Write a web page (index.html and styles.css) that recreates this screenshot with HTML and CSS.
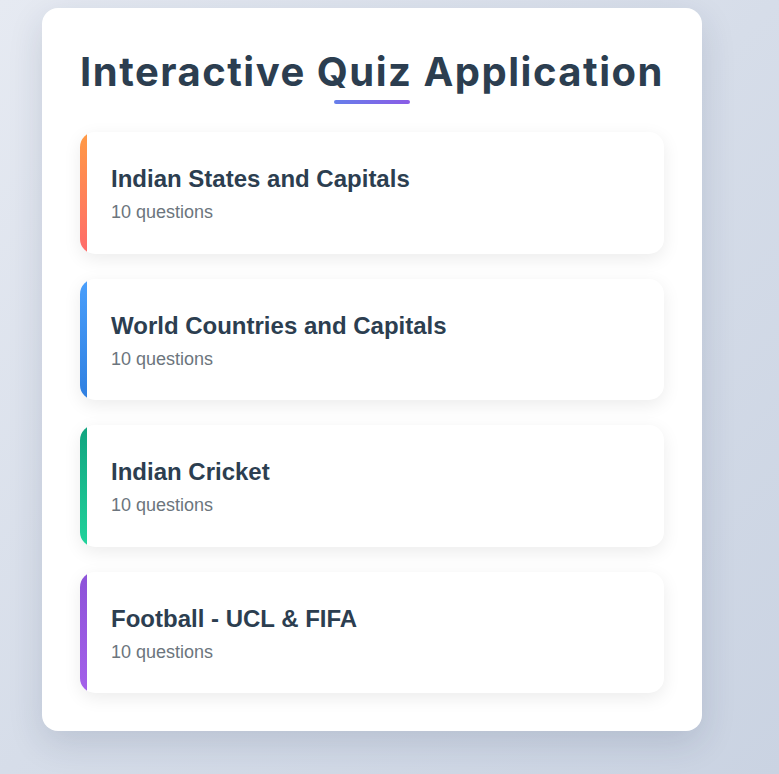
FILE: index.html
```html
<!DOCTYPE html>
<html lang="en">
<head>
<meta charset="utf-8">
<title>Interactive Quiz Application</title>
<link rel="stylesheet" href="styles.css">
</head>
<body>
<main class="container">
  <h1 class="title">Interactive Quiz Application</h1>
  <div class="quiz-list">
    <div class="quiz-card">
      <div class="stripe stripe-orange"></div>
      <div class="quiz-body">
        <h3 class="quiz-name">Indian States and Capitals</h3>
        <p class="quiz-count">10 questions</p>
      </div>
    </div>
    <div class="quiz-card">
      <div class="stripe stripe-blue"></div>
      <div class="quiz-body">
        <h3 class="quiz-name">World Countries and Capitals</h3>
        <p class="quiz-count">10 questions</p>
      </div>
    </div>
    <div class="quiz-card">
      <div class="stripe stripe-green"></div>
      <div class="quiz-body">
        <h3 class="quiz-name">Indian Cricket</h3>
        <p class="quiz-count">10 questions</p>
      </div>
    </div>
    <div class="quiz-card">
      <div class="stripe stripe-purple"></div>
      <div class="quiz-body">
        <h3 class="quiz-name">Football - UCL &amp; FIFA</h3>
        <p class="quiz-count">10 questions</p>
      </div>
    </div>
  </div>
</main>
</body>
</html>
```
FILE: styles.css
```css
html, body {
  margin: 0;
  height: 100%;
}
body {
  background: linear-gradient(135deg, #e6eaf2 0%, #d6dde9 50%, #cad3e2 100%);
  padding: 8px 0 0 42px;
  box-sizing: border-box;
  font-family: "Liberation Sans", Arial, sans-serif;
}
.container {
  width: 660px;
  box-sizing: border-box;
  background: #fff;
  border-radius: 16px;
  padding: 40px 38px 38px;
  box-shadow: 0 12px 35px rgba(30, 45, 80, 0.14);
}
.title {
  position: relative;
  margin: 0 0 36px;
  text-align: center;
  font-family: Inter, "Open Sans", sans-serif;
  font-weight: 700;
  font-size: 40px;
  line-height: 48px;
  letter-spacing: 1.5px;
  color: #2c3e50;
}
.title::after {
  content: "";
  position: absolute;
  left: 50%;
  bottom: -8px;
  width: 76px;
  height: 4px;
  margin-left: -38px;
  border-radius: 2px;
  background: linear-gradient(90deg, #667eea, #8b5ce6);
}
.quiz-list {
  display: flex;
  flex-direction: column;
  gap: 25px;
}
.quiz-card {
  display: flex;
  background: #fff;
  border-radius: 15px;
  overflow: hidden;
  box-shadow: 0 5px 18px rgba(0, 0, 0, 0.08);
  height: 121.5px;
}
.stripe {
  width: 7px;
  flex: none;
}
.stripe-orange { background: linear-gradient(180deg, #ff9a44, #ff6b6b); }
.stripe-blue { background: linear-gradient(180deg, #4a9ffc, #2f7fe0); }
.stripe-green { background: linear-gradient(180deg, #11a37f, #22d39c); }
.stripe-purple { background: linear-gradient(180deg, #8c52d8, #a461ea); }
.quiz-body {
  padding: 30px 24px;
}
.quiz-name {
  margin: 0 0 6px;
  font-size: 24px;
  line-height: 33px;
  font-weight: 700;
  color: #2c3e50;
}
.quiz-count {
  margin: 0;
  font-size: 18px;
  line-height: 22px;
  color: #6c757d;
}
```
